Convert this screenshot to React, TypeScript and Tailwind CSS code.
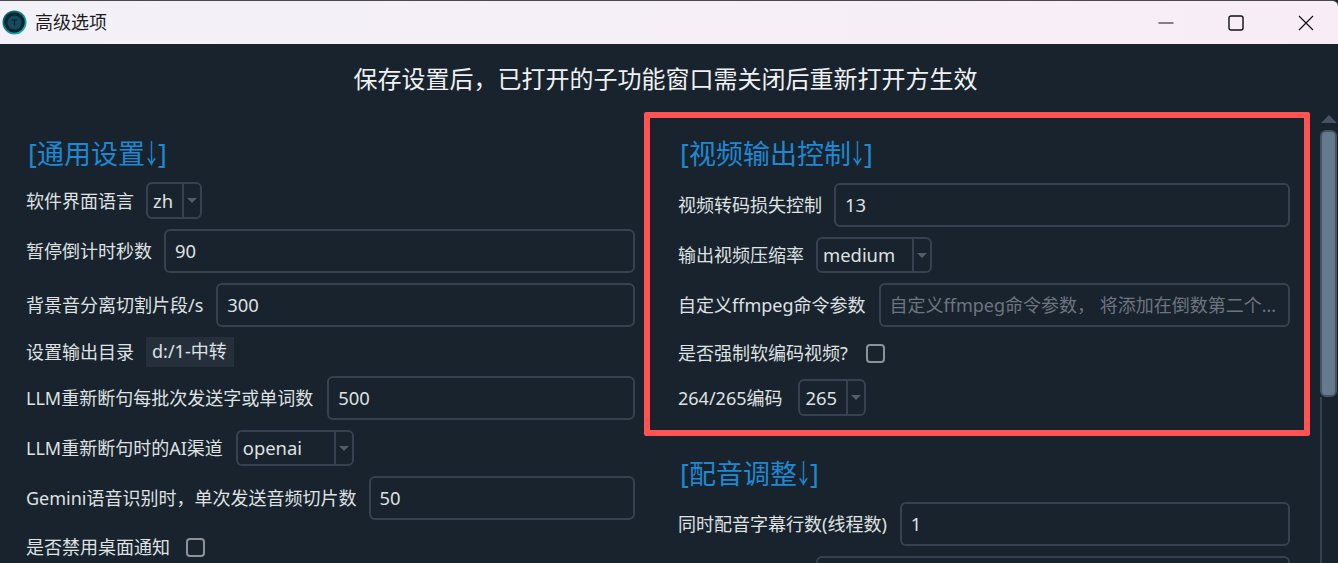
import { ReactNode } from "react";

const font = "font-['Noto_Sans','Noto_Sans_CJK_SC',sans-serif]";

const Label = ({ children }: { children: ReactNode }) => (
  <span className="text-[18px] leading-[28px] text-[#dfe1e2] whitespace-nowrap">{children}</span>
);

const Heading = ({ children }: { children: ReactNode }) => (
  <h2 className="h-[36px] text-[27px] leading-[38px] text-[#1e88d2] pl-[2px] mb-[1px] whitespace-nowrap">
    [{children}
    <span className="inline-block w-[13px] h-[36px] text-center scale-x-[0.65]">
      <span className="inline-block -ml-[7px] w-[27px]">↓</span>
    </span>]
  </h2>
);

const Input = ({ value, placeholder }: { value?: string; placeholder?: string }) => (
  <div className="flex-1 min-w-0 h-[44px] flex items-center border-2 border-[#37414f] rounded-[6px] px-[9px] text-[18.4px] overflow-hidden whitespace-nowrap">
    {value ? (
      <span className="text-[#dfe1e2]">{value}</span>
    ) : (
      <span className="text-[#6d7580] text-[18px]">{placeholder}</span>
    )}
  </div>
);

const Select = ({ value, width, height = "h-[37px]" }: { value: string; width: string; height?: string }) => (
  <div className={`${width} ${height} flex border-2 border-[#37414f] rounded-[6px] text-[18.4px] text-[#dfe1e2]`}>
    <div className="flex-1 flex items-center pl-[5px]">{value}</div>
    <div className="w-[18px] border-l-2 border-[#37414f] flex items-center justify-center">
      <div className="w-0 h-0 border-x-[5px] border-x-transparent border-t-[5px] border-t-[#525c6a]" />
    </div>
  </div>
);

const Checkbox = () => <div className="w-[19px] h-[19px] border-2 border-[#8d9299] rounded-[4px]" />;

const Row = ({ children, gap = "gap-[12px]", height = "" }: { children: ReactNode; gap?: string; height?: string }) => (
  <div className={`flex items-center ${gap} ${height}`}>{children}</div>
);

export default function App() {
  return (
    <div className={`${font} relative w-[1338px] h-[563px] overflow-hidden bg-[#19232d] flex flex-col`}>
      {/* title bar */}
      <div className="h-[44px] shrink-0 flex items-center bg-gradient-to-r from-[#f3f1f8] to-[#f8edf7] border-t border-[#4a4a4c] rounded-tr-[6px]">
        <svg className="ml-[2px] w-[25px] h-[25px]" viewBox="0 0 25 25">
          <defs>
            <linearGradient id="logoRing" x1="0" y1="0" x2="1" y2="1">
              <stop offset="0" stopColor="#0b4a55" />
              <stop offset="1" stopColor="#19c3c9" />
            </linearGradient>
          </defs>
          <circle cx="12.5" cy="12.5" r="12" fill="url(#logoRing)" />
          <circle cx="12.5" cy="12.5" r="10.3" fill="#0b2630" />
          <circle cx="12.5" cy="12.5" r="7" fill="#174a5e" />
          <path d="M9.8 10.2h5.4M12.5 10.2v5.4" stroke="#0a2732" strokeWidth="1.3" fill="none" />
        </svg>
        <span className="ml-[8px] text-[18px] text-[#1c1c1c]">高级选项</span>
        <div className="ml-auto flex items-center">
          <svg className="w-[16px] h-[16px] mr-[54px]" viewBox="0 0 16 16">
            <path d="M0.5 8h15" stroke="#111" strokeWidth="1" />
          </svg>
          <svg className="w-[16px] h-[16px] mr-[54px]" viewBox="0 0 16 16">
            <rect x="1" y="1" width="14" height="14" rx="2" fill="none" stroke="#111" strokeWidth="1.4" />
          </svg>
          <svg className="w-[16px] h-[16px] mr-[24px]" viewBox="0 0 16 16">
            <path d="M1 1l14 14M15 1L1 15" stroke="#111" strokeWidth="1.2" />
          </svg>
        </div>
      </div>

      <p className="text-center text-[24px] leading-[36px] text-[#f0f1f2] pt-[17px] pr-[7px] h-[68px] shrink-0">
        保存设置后，已打开的子功能窗口需关闭后重新打开方生效
      </p>

      <div className="flex flex-1 min-h-0">
        <div className="flex items-start gap-[43px] pl-[26px] pt-[23px] w-[1290px] shrink-0">
          <div className="w-[609px] shrink-0 flex flex-col gap-[10px]">
            <Heading>通用设置</Heading>
            <Row><Label>软件界面语言</Label><Select value="zh" width="w-[56px]" /></Row>
            <Row><Label>暂停倒计时秒数</Label><Input value="90" /></Row>
            <Row gap="gap-[13px]"><Label>背景音分离切割片段/s</Label><Input value="300" /></Row>
            <Row height="h-[29px]">
              <Label>设置输出目录</Label>
              <span className="h-[30px] w-[88px] flex items-center bg-[#25303a] pl-[6px] text-[18px] text-[#dfe1e2] whitespace-nowrap">d:/1-中转</span>
            </Row>
            <Row gap="gap-[14px]"><Label>LLM重新断句每批次发送字或单词数</Label><Input value="500" /></Row>
            <Row gap="gap-[13px]"><Label>LLM重新断句时的AI渠道</Label><Select value="openai" width="w-[118px]" height="h-[36px]" /></Row>
            <Row><Label>Gemini语音识别时，单次发送音频切片数</Label><Input value="50" /></Row>
            <Row gap="gap-[16px]" height="h-[34px]"><Label>是否禁用桌面通知</Label><Checkbox /></Row>
          </div>
          <div className="flex-1 min-w-0 flex flex-col gap-[10px]">
            <Heading>视频输出控制</Heading>
            <div className="mt-[1px]"><Row><Label>视频转码损失控制</Label><Input value="13" /></Row></div>
            <Row><Label>输出视频压缩率</Label><Select value="medium" width="w-[116px]" height="h-[36px]" /></Row>
            <Row gap="gap-[13px]"><Label>自定义ffmpeg命令参数</Label><Input placeholder="自定义ffmpeg命令参数， 将添加在倒数第二个..." /></Row>
            <Row gap="gap-[18px]" height="h-[32px]"><Label>是否强制软编码视频?</Label><Checkbox /></Row>
            <Row gap="gap-[16px]"><Label>264/265编码</Label><Select value="265" width="w-[68px]" /></Row>
            <div className="mt-[29px]"><Heading>配音调整</Heading></div>
            <Row gap="gap-[13px]"><Label>同时配音字幕行数(线程数)</Label><Input value="1" /></Row>
            <Row><div className="w-[126px] shrink-0" /><Input value=" " /></Row>
          </div>
        </div>

        {/* scrollbar */}
        <div className="ml-auto w-[18px] flex flex-col items-start pt-[3px]">
          <div className="ml-[1px] w-0 h-0 border-x-[8px] border-x-transparent border-b-[8px] border-b-[#465261] mb-[7px]" />
          <div className="w-[17px] h-[267px] shrink-0 bg-[#637a8f] border-2 border-[#465261] rounded-[6px]" />
          <div className="flex-1 border-l-2 border-[#37414f]" />
        </div>
      </div>

      {/* red annotation box */}
      <div className="absolute left-[644px] top-[112px] w-[666px] h-[324px] border-[6px] border-[#ff5252] rounded-[2px]" />
    </div>
  );
}
